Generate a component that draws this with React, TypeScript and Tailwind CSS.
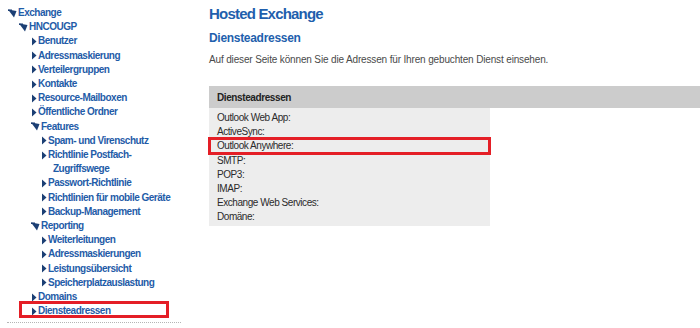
import React from "react";

type NavItem = {
  label: string;
  level: number;
  open?: boolean;
  wrap?: string;
  marked?: boolean;
};

const nav: NavItem[] = [
  { label: "Exchange", level: 0, open: true },
  { label: "HNCOUGP", level: 1, open: true },
  { label: "Benutzer", level: 2 },
  { label: "Adressmaskierung", level: 2 },
  { label: "Verteilergruppen", level: 2 },
  { label: "Kontakte", level: 2 },
  { label: "Resource-Mailboxen", level: 2 },
  { label: "Öffentliche Ordner", level: 2 },
  { label: "Features", level: 2, open: true },
  { label: "Spam- und Virenschutz", level: 3 },
  { label: "Richtlinie Postfach-", level: 3, wrap: "Zugriffswege" },
  { label: "Passwort-Richtlinie", level: 3 },
  { label: "Richtlinien für mobile Geräte", level: 3 },
  { label: "Backup-Management", level: 3 },
  { label: "Reporting", level: 2, open: true },
  { label: "Weiterleitungen", level: 3 },
  { label: "Adressmaskierungen", level: 3 },
  { label: "Leistungsübersicht", level: 3 },
  { label: "Speicherplatzauslastung", level: 3 },
  { label: "Domains", level: 2 },
  { label: "Diensteadressen", level: 2, marked: true },
];

const indent = ["pl-[8px]", "pl-[19px]", "pl-[31px]", "pl-[41px]"];

const rows = [
  "Outlook Web App:",
  "ActiveSync:",
  "Outlook Anywhere:",
  "SMTP:",
  "POP3:",
  "IMAP:",
  "Exchange Web Services:",
  "Domäne:",
];

function Arrow({ open }: { open?: boolean }) {
  if (open) {
    return (
      <svg width="10" height="9" viewBox="0 0 10 9" className="shrink-0">
        <polygon points="0,0.5 8.5,2 6,8.5" fill="#1c3f74" />
        <rect x="0" y="0.5" width="4" height="1.5" fill="#1c3f74" />
      </svg>
    );
  }
  return (
    <svg width="7" height="9" viewBox="0 0 7 9" className="shrink-0">
      <polygon points="1,0.5 5.5,4.5 1,8.5" fill="#1c3f74" />
    </svg>
  );
}

export default function App() {
  return (
    <div className="w-[700px] h-[328px] overflow-hidden bg-white flex font-['Liberation_Sans',Arial,sans-serif]">
      <div className="w-[200px] shrink-0 pt-[6px]">
        <ul className="text-[10px] tracking-[-0.5px] font-bold text-[#1f5ca8] leading-[14.2px]">
          {nav.map((item) => (
            <li key={item.label} className={`relative ${indent[item.level]}`}>
              <div className="flex items-center">
                <Arrow open={item.open} />
                <span>{item.label}</span>
              </div>
              {item.wrap && <div className="pl-[12px]">{item.wrap}</div>}
              {item.marked && (
                <div className="absolute left-[19px] top-[-3px] w-[150px] h-[17px] border-[3px] border-[#e41e26]" />
              )}
            </li>
          ))}
        </ul>
        <div className="mt-[4px] ml-[7px] w-[174px] border-t border-dotted border-[#b5b5b5]" />
      </div>

      <div className="flex-1 pl-[9px] pt-[5px]">
        <h1 className="text-[15px] tracking-[-0.8px] font-bold text-[#1f5fad] leading-[18px]">Hosted Exchange</h1>
        <h2 className="mt-[7px] text-[12px] tracking-[-0.3px] font-bold text-[#1f5fad] leading-[16px]">Diensteadressen</h2>
        <p className="mt-[7px] text-[10px] tracking-[-0.15px] text-[#4a4a4a] leading-[14px]">
          Auf dieser Seite können Sie die Adressen für Ihren gebuchten Dienst einsehen.
        </p>
        <div className="mt-[19px] h-[22px] bg-[#cccccc] flex items-center pl-[8px] text-[10px] tracking-[-0.4px] font-bold text-[#222]">
          Diensteadressen
        </div>
        <div className="w-[281px] bg-[#ededed] pt-[3px] pb-[1px]">
          {rows.map((r) => (
            <div key={r} className="relative pl-[8px] text-[10px] tracking-[-0.45px] text-[#2b2b2b] leading-[14.2px]">
              {r}
              {r === "Outlook Anywhere:" && (
                <div className="absolute left-[-1px] top-[-2px] w-[283px] h-[18px] border-[3px] border-[#e41e26]" />
              )}
            </div>
          ))}
        </div>
      </div>
    </div>
  );
}
